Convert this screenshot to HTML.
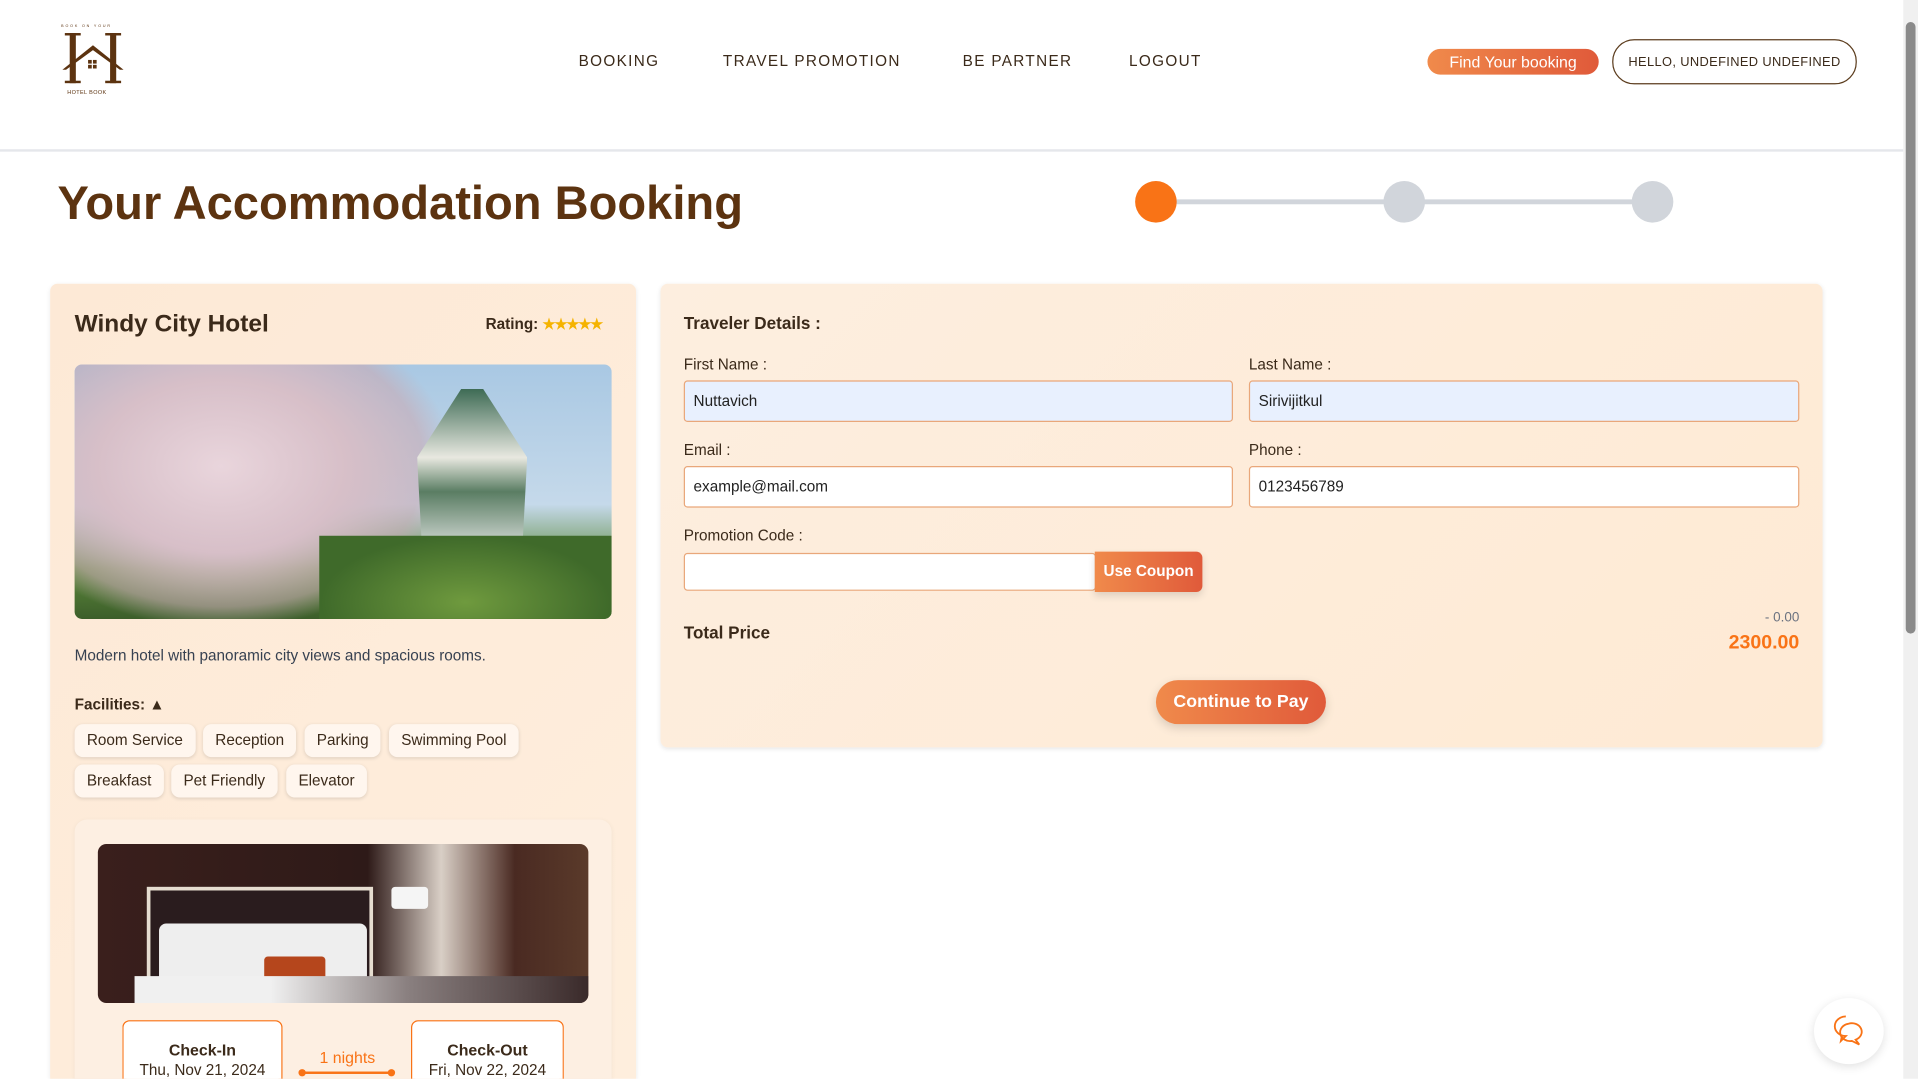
<!DOCTYPE html>
<html><head><meta charset="utf-8"><style>
html,body{margin:0;padding:0;width:1918px;height:1080px;overflow:hidden;background:#fff}
#w{position:absolute;left:0;top:0;width:1568px;height:882px;overflow:hidden;transform:scale(1.2232);transform-origin:0 0;font-family:"Liberation Sans",sans-serif;color:#3b2a1a}
.a{position:absolute}
.nav{position:absolute;top:43px;font-size:12.5px;letter-spacing:1.1px;color:#3b2a1a}
.lbl{position:absolute;font-size:12.5px;color:#3b2a1a}
.inp{position:absolute;border:1px solid #e9a77a;border-radius:3px;background:#fff;font-size:12.5px;line-height:32px;padding-left:7px;box-sizing:border-box;height:34px;color:#222}
.tag{position:absolute;height:27px;line-height:27px;padding:0 10px;background:#fff6ee;border-radius:7px;font-size:12.5px;box-shadow:0 1px 3px rgba(0,0,0,.12);color:#3b2a1a}
.dot{position:absolute;width:34px;height:34px;border-radius:50%;top:148px}
</style></head><body><div id="w">
<div class="a" style="left:48px;top:19px;width:54px;height:62px">
<div class="a" style="left:2px;top:0;font-size:3px;letter-spacing:1.5px;color:#5c3310">BOOK ON YOUR</div>
<svg class="a" style="left:2px;top:6px" width="52" height="46" viewBox="0 0 52 46">
<rect x="7" y="2" width="5" height="41" fill="#5c3310"/><rect x="40" y="2" width="5" height="41" fill="#5c3310"/>
<rect x="3" y="2" width="13" height="2" fill="#5c3310"/><rect x="36" y="2" width="13" height="2" fill="#5c3310"/>
<rect x="3" y="41" width="13" height="2" fill="#5c3310"/><rect x="36" y="41" width="13" height="2" fill="#5c3310"/>
<path d="M1 32 L26 12 L51 32 L48 32 L26 16 L4 32Z" fill="#5c3310"/>
<rect x="22" y="24" width="3" height="3" fill="#5c3310"/><rect x="26" y="24" width="3" height="3" fill="#5c3310"/><rect x="22" y="28" width="3" height="3" fill="#5c3310"/><rect x="26" y="28" width="3" height="3" fill="#5c3310"/>
</svg>
<div class="a" style="left:7px;top:54px;font-size:4.5px;color:#5c3310;letter-spacing:.3px">HOTEL BOOK</div>
</div>
<div class="nav" style="left:473px">BOOKING</div>
<div class="nav" style="left:591px">TRAVEL PROMOTION</div>
<div class="nav" style="left:787px">BE PARTNER</div>
<div class="nav" style="left:923px">LOGOUT</div>
<div class="a" style="left:1167px;top:40px;width:140px;height:21px;border-radius:11px;background:linear-gradient(90deg,#f08a4b,#e05a3a);color:#fff;font-size:13px;line-height:21px;text-align:center">Find Your booking</div>
<div class="a" style="left:1318px;top:32px;width:198px;height:35px;border:1px solid #5c3d1e;border-radius:18px;font-size:10.5px;line-height:36px;text-align:center;letter-spacing:.3px">HELLO, UNDEFINED UNDEFINED</div>
<div class="a" style="left:0;top:122px;width:1556px;height:2px;background:#e5e7eb"></div>
<div class="a" style="left:1556px;top:0;width:12px;height:882px;background:#f0f0f0"></div>
<div class="a" style="left:1558px;top:18px;width:8px;height:500px;border-radius:4px;background:#8a8a8a"></div>
<div class="a" style="left:47px;top:145px;font-size:38.5px;font-weight:bold;color:#5c3310">Your Accommodation Booking</div>
<div class="a" style="left:945px;top:163px;width:406px;height:4px;background:#d1d5db"></div>
<div class="dot" style="left:928px;background:#f97316"></div>
<div class="dot" style="left:1131px;background:#d1d5db"></div>
<div class="dot" style="left:1334px;background:#d1d5db"></div>
<div class="a" style="left:41px;top:232px;width:479px;height:650px;border-radius:6px 6px 0 0;background:linear-gradient(135deg,#fde9d6,#feeedd);box-shadow:0 1px 4px rgba(0,0,0,.08)"></div>
<div class="a" style="left:61px;top:254px;font-size:20px;font-weight:bold">Windy City Hotel</div>
<div class="a" style="left:397px;top:258px;font-size:12.5px;font-weight:bold">Rating: <span style="color:#f5b300;font-size:12px;letter-spacing:-1px">★★★★★</span></div>
<div class="a" style="left:61px;top:298px;width:439px;height:208px;border-radius:6px;overflow:hidden;background:linear-gradient(180deg,#a9c8e3 0%,#c5d9ea 55%,#5e8a3c 80%,#3c5e2a 100%)">
<div class="a" style="left:0;top:0;width:300px;height:208px;background:radial-gradient(ellipse at 40% 40%,#e9d5dc 0%,#d7bfc8 40%,rgba(200,170,180,.6) 65%,transparent 75%)"></div>
<div class="a" style="left:280px;top:20px;width:90px;height:140px;background:linear-gradient(180deg,#3e6b55,#e8e8e0 40%,#5a7d63 60%,#eee 100%);clip-path:polygon(40% 0,60% 0,100% 40%,95% 100%,5% 100%,0 40%)"></div>
<div class="a" style="left:200px;top:140px;width:239px;height:68px;background:radial-gradient(ellipse at 50% 80%,#6f9a3e,#3f6a2a 70%);"></div>
</div>
<div class="a" style="left:61px;top:529px;font-size:12.5px;color:#374151">Modern hotel with panoramic city views and spacious rooms.</div>
<div class="a" style="left:61px;top:569px;font-size:12.5px;font-weight:bold">Facilities: ▲</div>
<div class="tag" style="left:61px;top:592px">Room Service</div>
<div class="tag" style="left:166px;top:592px">Reception</div>
<div class="tag" style="left:249px;top:592px">Parking</div>
<div class="tag" style="left:318px;top:592px">Swimming Pool</div>
<div class="tag" style="left:61px;top:625px">Breakfast</div>
<div class="tag" style="left:140px;top:625px">Pet Friendly</div>
<div class="tag" style="left:234px;top:625px">Elevator</div>
<div class="a" style="left:61px;top:670px;width:439px;height:212px;border-radius:10px 10px 0 0;background:#fdefe2;box-shadow:0 1px 4px rgba(0,0,0,.05)"></div>
<div class="a" style="left:80px;top:690px;width:401px;height:130px;border-radius:7px;overflow:hidden;background:linear-gradient(90deg,#3a1f1c 0%,#2e1a18 55%,#d9cfc6 70%,#4a2a22 85%,#5a3a2a 100%)">
<div class="a" style="left:40px;top:35px;width:179px;height:89px;background:#2a1c1e;border:3px solid #e6ddd0"></div>
<div class="a" style="left:50px;top:65px;width:170px;height:45px;background:#eee;border-radius:6px 6px 0 0"></div>
<div class="a" style="left:136px;top:92px;width:50px;height:30px;background:#b5461c;border-radius:3px"></div>
<div class="a" style="left:30px;top:108px;width:371px;height:22px;background:linear-gradient(90deg,#f0f0f0 30%,#8a8080 60%,#3a2a2a)"></div>
<div class="a" style="left:240px;top:35px;width:30px;height:18px;background:#f5f5f5;border-radius:3px"></div>
</div>
<div class="a" style="left:100px;top:834px;width:129px;height:47px;overflow:hidden;border:1px solid #f97316;border-bottom:none;border-radius:6px 6px 0 0;background:#fff;text-align:center">
<div style="font-size:13px;font-weight:bold;margin-top:16px">Check-In</div><div style="font-size:12.5px;margin-top:3px;line-height:13px">Thu, Nov 21, 2024</div></div>
<div class="a" style="left:336px;top:834px;width:123px;height:47px;overflow:hidden;border:1px solid #f97316;border-bottom:none;border-radius:6px 6px 0 0;background:#fff;text-align:center">
<div style="font-size:13px;font-weight:bold;margin-top:16px">Check-Out</div><div style="font-size:12.5px;margin-top:3px;line-height:13px">Fri, Nov 22, 2024</div></div>
<div class="a" style="left:244px;top:857px;width:80px;text-align:center;font-size:13px;line-height:15px;color:#f97316">1 nights</div>
<div class="a" style="left:247px;top:876px;width:73px;height:2px;background:#f97316"></div>
<div class="a" style="left:244px;top:874px;width:6px;height:6px;border-radius:50%;background:#f97316"></div>
<div class="a" style="left:317px;top:874px;width:6px;height:6px;border-radius:50%;background:#f97316"></div>
<div class="a" style="left:540px;top:232px;width:950px;height:379px;border-radius:6px;background:linear-gradient(135deg,#fdeedf,#feead4);box-shadow:0 1px 4px rgba(0,0,0,.1)"></div>
<div class="a" style="left:559px;top:256px;font-size:14px;font-weight:bold">Traveler Details :</div>
<div class="lbl" style="left:559px;top:291px">First Name :</div>
<div class="lbl" style="left:1021px;top:291px">Last Name :</div>
<div class="inp" style="left:559px;top:311px;width:449px;background:#e8f0fe">Nuttavich</div>
<div class="inp" style="left:1021px;top:311px;width:450px;background:#e8f0fe">Sirivijitkul</div>
<div class="lbl" style="left:559px;top:361px">Email :</div>
<div class="lbl" style="left:1021px;top:361px">Phone :</div>
<div class="inp" style="left:559px;top:381px;width:449px">example@mail.com</div>
<div class="inp" style="left:1021px;top:381px;width:450px">0123456789</div>
<div class="lbl" style="left:559px;top:431px">Promotion Code :</div>
<div class="inp" style="left:559px;top:452px;width:337px;height:31px"></div>
<div class="a" style="left:895px;top:451px;width:88px;height:33px;border-radius:0 5px 5px 0;background:linear-gradient(90deg,#f08a4b,#e05a3a);color:#fff;font-size:12.5px;font-weight:bold;line-height:33px;text-align:center;box-shadow:0 3px 6px rgba(0,0,0,.12)">Use Coupon</div>
<div class="a" style="left:559px;top:509px;font-size:14px;font-weight:bold">Total Price</div>
<div class="a" style="left:1400px;top:499px;width:71px;text-align:right;font-size:11px;color:#6b7280">- 0.00</div>
<div class="a" style="left:1380px;top:517px;width:91px;text-align:right;font-size:16px;font-weight:bold;color:#f97316">2300.00</div>
<div class="a" style="left:945px;top:556px;width:139px;height:36px;border-radius:18px;background:linear-gradient(90deg,#f08a4b,#e05a3a);color:#fff;font-size:14.5px;font-weight:bold;line-height:36px;text-align:center;box-shadow:0 3px 8px rgba(0,0,0,.15)">Continue to Pay</div>
<div class="a" style="left:1483px;top:816px;width:57px;height:54px;border-radius:50%;background:#fff;box-shadow:0 2px 8px rgba(0,0,0,.12)">
<svg class="a" style="left:14px;top:12px" width="30" height="30" viewBox="0 0 30 30" fill="none" stroke="#f97316" stroke-width="1.5">
<path d="M12 3a9 8 0 1 0 0 16l-4 4 1-5"/><path d="M14 9a8 7 0 1 1 6 13l3 4-6-3a8 7 0 0 1-3-14z"/></svg></div>
</div></body></html>
